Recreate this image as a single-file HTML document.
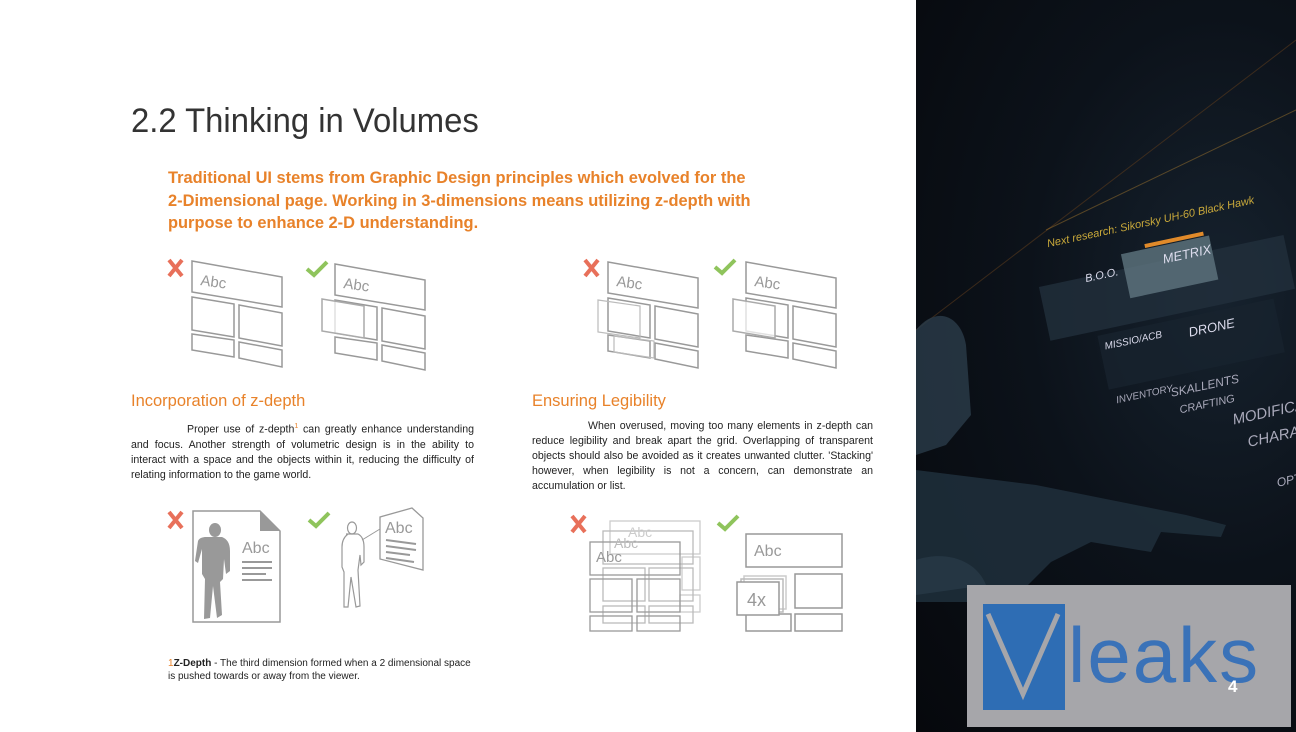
<!DOCTYPE html>
<html><head><meta charset="utf-8"><style>
body{margin:0;width:1296px;height:732px;position:relative;overflow:hidden;background:#fff;font-family:"Liberation Sans",sans-serif}
.a{position:absolute}
h1{position:absolute;left:131px;top:102px;margin:0;font-weight:normal;font-size:34px;color:#333;white-space:nowrap;transform:scaleX(0.965);transform-origin:left}
.lead{left:168px;top:167px;width:640px;color:#e8822a;font-weight:bold;font-size:16.5px;line-height:22.5px;white-space:nowrap;transform:scaleX(0.995);transform-origin:left}
.h2{color:#e8822a;font-size:16.5px;}
.p{font-size:10.6px;line-height:15px;color:#222;text-align:justify;text-indent:56px}
</style></head><body>
<h1>2.2 Thinking in Volumes</h1>
<div class="a lead">Traditional UI stems from Graphic Design principles which evolved for the<br>2-Dimensional page. Working in 3-dimensions means utilizing z-depth with<br>purpose to enhance 2-D understanding.</div>
<div class="a h2" style="left:131px;top:392px">Incorporation of z-depth</div>
<div class="a h2" style="left:532px;top:392px">Ensuring Legibility</div>
<div class="a p" style="left:131px;top:419px;width:343px">Proper use of z-depth<sup style="color:#e8822a;font-size:7px">1</sup> can greatly enhance understanding and focus. Another strength of volumetric design is in the ability to interact with a space and the objects within it, reducing the difficulty of relating information to the game world.</div>
<div class="a p" style="left:532px;top:419px;width:341px">When overused, moving too many elements in z-depth can reduce legibility and break apart the grid. Overlapping of transparent objects should also be avoided as it creates unwanted clutter. 'Stacking' however, when legibility is not a concern, can demonstrate an accumulation or list.</div>
<div class="a" style="left:168px;top:657px;font-size:10px;line-height:13px;color:#222"><span style="color:#e8822a">1</span><b>Z-Depth</b> - The third dimension formed when a 2 dimensional space<br>is pushed towards or away from the viewer.</div>

<svg class="a" style="left:0;top:0" width="916" height="732">
<defs>
<g id="lay" fill="none" stroke="#999" stroke-width="1.5">
<polygon points="0,0 90,16 90,46 0,31"/>
<polygon points="0,36 42,43 42,76 0,69"/>
<polygon points="47,44 90,52 90,85 47,77"/>
<polygon points="0,73 42,79 42,96 0,89"/>
<polygon points="47,81 90,89 90,106 47,97"/>
<text x="8" y="24" font-size="15" fill="#999" stroke="none" font-family="Liberation Sans" transform="rotate(8 8 24)">Abc</text>
</g>
<path id="x" d="M0,0 L13,16 M13,0 L0,16" stroke="#e8705a" stroke-width="4" fill="none"/>
<path id="ck" d="M0,7 L7,13 L20,0" stroke="#8fc45c" stroke-width="4" fill="none"/>
</defs>
<use href="#x" x="169" y="260"/><use href="#lay" x="192" y="261"/>
<use href="#ck" x="307" y="262"/><use href="#lay" x="335" y="264"/>
<polygon points="322,299 364,306 364,338 322,331" fill="#fff" fill-opacity=".7" stroke="#aaa" stroke-width="1.5"/>
<use href="#x" x="585" y="260"/><use href="#lay" x="608" y="262"/>
<polygon points="598,300 640,306 640,338 598,332" fill="none" stroke="#bbb" stroke-width="1.2"/>
<polygon points="614,336 654,341 654,358 614,352" fill="none" stroke="#bbb" stroke-width="1.2"/>
<use href="#ck" x="715" y="260"/><use href="#lay" x="746" y="262"/>
<polygon points="733,299 775,306 775,338 733,331" fill="#fff" fill-opacity=".7" stroke="#aaa" stroke-width="1.5"/>

<use href="#x" x="169" y="512"/>
<path d="M193,511 H260 L280,531 V622 H193 Z" fill="none" stroke="#999" stroke-width="1.5"/>
<path d="M260,511 L280,531 H260 Z" fill="#999"/>
<g fill="#999">
<ellipse cx="215" cy="530" rx="6" ry="7"/>
<path d="M208,537 h14 c5,2 8,6 8,14 v20 l-4,3 l-2,-15 l-1,20 l-3,3 l2,33 l-5,3 l-4,-32 l-3,32 l-6,1 l1,-40 l-3,-5 v-25 l-4,14 l-3,-2 l3,-20 c1,-3 5,-4 8,-4z"/>
</g>
<text x="242" y="553" font-size="16" fill="#999">Abc</text>
<path d="M242,562h30M242,568h30M242,574h24M242,580h30" stroke="#999" stroke-width="2"/>
<use href="#ck" x="309" y="513"/>
<g fill="none" stroke="#999" stroke-width="1.2">
<ellipse cx="352" cy="528" rx="4.5" ry="6"/>
<path d="M346,534 h12 c4,2 6,6 6,13 v15 l-3,3 l-1,-10 l-2,15 l2,36 l-4,1 l-5,-30 l-3,30 l-4,0 l0,-35 l-2,-5 v-20 c0,-6 2,-10 6,-13z"/>
</g>
<path d="M362,540 L380,529" stroke="#999" stroke-width="1"/>
<path d="M380,517 L412,508 L423,518 L423,570 L380,559 Z" fill="#fff" stroke="#999" stroke-width="1.3"/>
<text x="385" y="533" font-size="16" fill="#999">Abc</text>
<path d="M386,540l30,4M386,546l30,4M386,552l24,3M386,558l28,4" stroke="#999" stroke-width="2"/>

<use href="#x" x="572" y="516"/>
<g fill="none" stroke-width="1.3">
<g stroke="#ccc"><rect x="610" y="521" width="90" height="33"/><rect x="682" y="557" width="18" height="33"/><rect x="680" y="595" width="20" height="17"/></g>
<g stroke="#bbb"><rect x="603" y="531" width="90" height="33"/><rect x="603" y="568" width="42" height="33"/><rect x="649" y="568" width="44" height="33"/><rect x="603" y="606" width="42" height="17"/><rect x="649" y="606" width="44" height="17"/></g>
<g stroke="#999"><rect x="590" y="542" width="90" height="33"/><rect x="590" y="579" width="42" height="33"/><rect x="637" y="579" width="43" height="33"/><rect x="590" y="616" width="42" height="15"/><rect x="637" y="616" width="43" height="15"/></g>
</g>
<text x="628" y="537" font-size="14" fill="#ccc">Abc</text><text x="614" y="548" font-size="14" fill="#bbb">Abc</text><text x="596" y="562" font-size="15" fill="#999">Abc</text>
<use href="#ck" x="718" y="516"/>
<g fill="none" stroke="#999" stroke-width="1.5">
<rect x="746" y="534" width="96" height="33"/><rect x="795" y="574" width="47" height="34"/><rect x="795" y="614" width="47" height="17"/><rect x="746" y="614" width="45" height="17"/>
<rect x="744" y="576" width="42" height="33" stroke="#ccc"/><rect x="741" y="579" width="42" height="33" stroke="#bbb"/>
<rect x="737" y="582" width="42" height="33" fill="#fff"/></g>
<text x="754" y="556" font-size="16" fill="#999">Abc</text><text x="747" y="606" font-size="18" fill="#999">4x</text>
</svg>

<div class="a" style="left:916px;top:0;width:380px;height:732px;background:radial-gradient(ellipse at 80% 40%,#16222e 0%,#0c121a 45%,#06080c 100%)">
<svg width="380" height="732" style="position:absolute;left:0;top:0">
<path d="M0,330 L380,40" stroke="#5a3a1c" stroke-width="1" opacity=".6"/>
<path d="M130,230 L380,110" stroke="#c08a30" stroke-width="1" opacity=".4"/>
<g transform="rotate(-12 230 300)" font-family="Liberation Sans" font-style="italic">
<rect x="128" y="265" width="250" height="55" fill="#22303c" opacity=".8"/>
<rect x="215" y="250" width="90" height="45" fill="#5f7680" opacity=".8"/>
<rect x="240" y="245" width="60" height="4" fill="#e08a2a"/>
<text x="255" y="268" fill="#dde" font-size="13">METRIX</text>
<text x="175" y="270" fill="#dde" font-size="11">B.O.O.</text>
<rect x="175" y="325" width="180" height="55" fill="#18232e" opacity=".8"/>
<text x="180" y="340" fill="#dde" font-size="10">MISSIO/ACB</text>
<text x="265" y="345" fill="#dde" font-size="13">DRONE</text>
<text x="180" y="395" fill="#aab" font-size="10">INVENTORY</text>
<text x="235" y="400" fill="#aab" font-size="12">SKALLENTS</text>
<text x="240" y="418" fill="#aab" font-size="11">CRAFTING</text>
<text x="290" y="440" fill="#aab" font-size="15">MODIFICATION</text>
<text x="300" y="465" fill="#aab" font-size="15">CHARACTER</text>
<text x="320" y="510" fill="#aab" font-size="12">OPTIONS</text>
<text x="340" y="530" fill="#aab" font-size="12">EXIT</text>
<text x="145" y="228" fill="#c9a93a" font-size="11">Next research: Sikorsky UH-60 Black Hawk</text>
</g>
<path d="M0,330 c20,-25 45,-15 50,15 l5,70 l-25,30 l-30,10 z" fill="#2a3c4a" opacity=".8"/>
<path d="M0,470 l120,15 l150,30 l40,10 l-5,12 l-60,-5 l-10,20 l-60,-10 l-40,20 l-40,40 l-95,0z" fill="#1e2e3a" opacity=".9"/>
<path d="M0,560 c30,-10 60,0 70,25 l-70,10z" fill="#2a3c4a" opacity=".7"/>
</svg>
<div class="a" style="left:51px;top:585px;width:324px;height:142px;background:#a6a6aa"></div>
<div class="a" style="left:67px;top:604px;width:82px;height:106px;background:#2e6db4"></div>
<svg class="a" style="left:67px;top:604px" width="82" height="106"><path d="M5,10 L40,90 L75,10" stroke="#a6a6aa" stroke-width="5" fill="none"/></svg>
<div class="a" style="left:152px;top:610px;font-size:78px;color:#3a72b8;letter-spacing:2px;line-height:90px">leaks</div>
<div class="a" style="left:312px;top:677px;font-size:17px;font-weight:bold;color:#fff">4</div>
</div>
</body></html>
